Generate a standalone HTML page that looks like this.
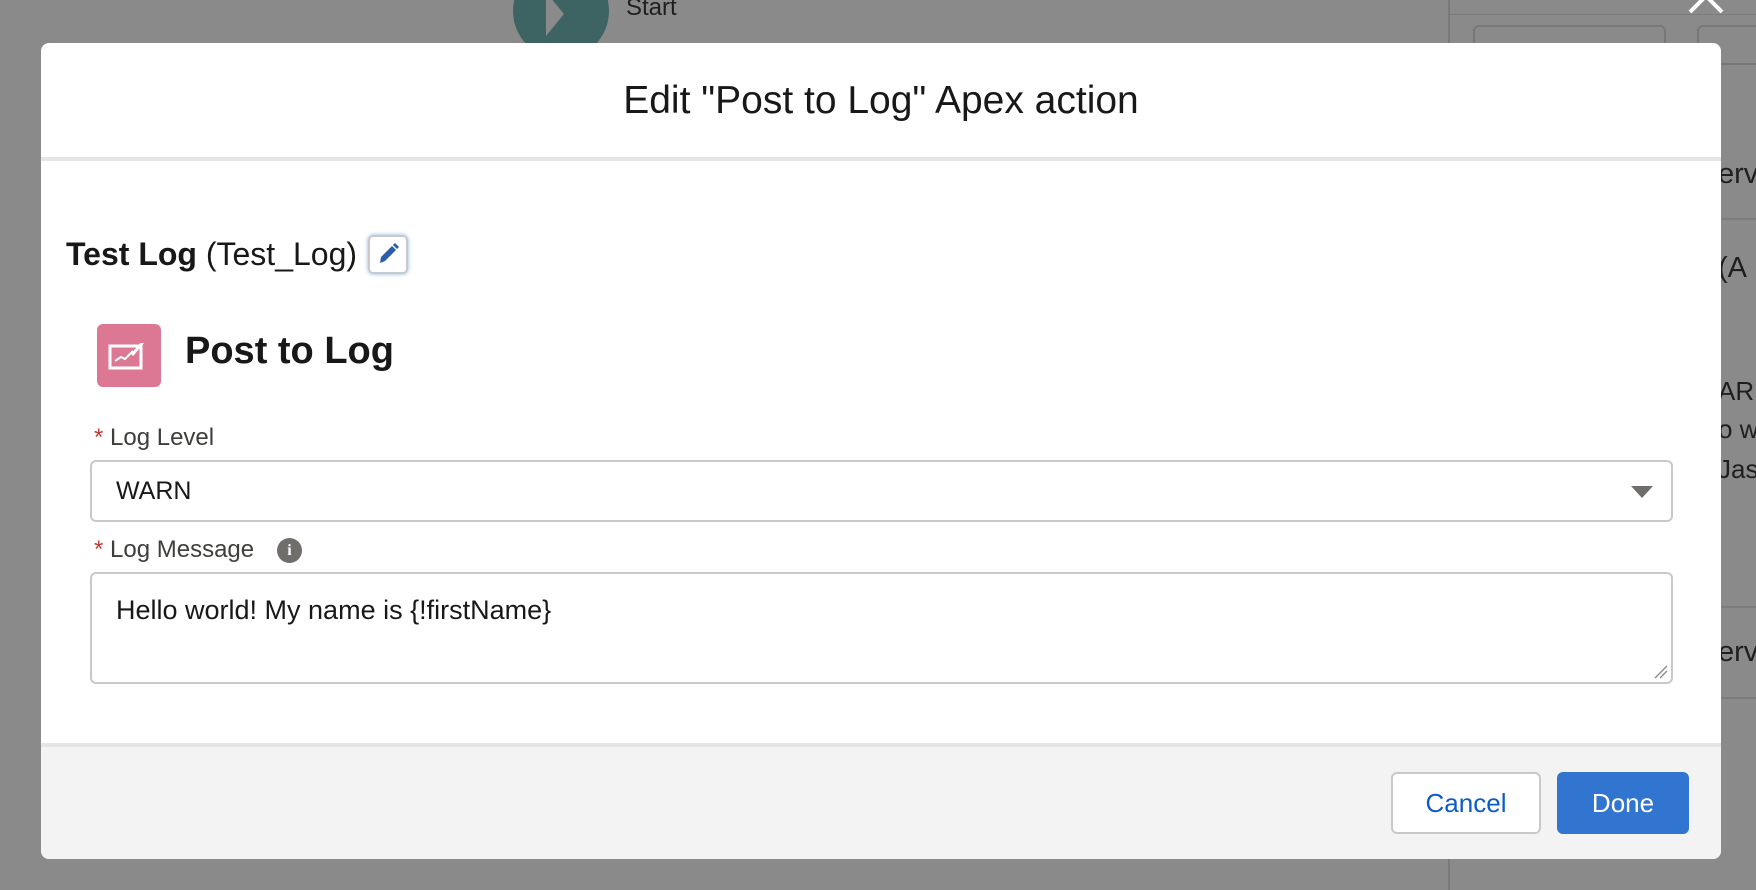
<!DOCTYPE html>
<html><head><meta charset="utf-8"><style>
*{box-sizing:border-box;margin:0;padding:0}
body{width:1756px;height:890px;overflow:hidden;background:#8a8a8a;font-family:"Liberation Sans",sans-serif;position:relative;color:#181818}
.abs{position:absolute}
.bgtxt{position:absolute;color:#1f1f1f;font-size:29px;white-space:nowrap}
</style></head><body>
<div class="abs" style="left:1448px;top:0;width:2px;height:890px;background:#7a7a7a"></div>
<div class="abs" style="left:1450px;top:14px;width:306px;height:1px;background:#7c7c7c"></div>
<div class="abs" style="left:1473px;top:25px;width:193px;height:40px;border:2px solid #777;border-radius:6px"></div>
<div class="abs" style="left:1697px;top:25px;width:70px;height:40px;border:2px solid #777;border-radius:6px"></div>
<div class="abs" style="left:1450px;top:218px;width:306px;height:2px;background:#7c7c7c"></div>
<div class="abs" style="left:1450px;top:606px;width:306px;height:2px;background:#7c7c7c"></div>
<div class="abs" style="left:1450px;top:697px;width:306px;height:2px;background:#7c7c7c"></div>
<div class="bgtxt" style="left:1718px;top:158px">erv</div>
<div class="bgtxt" style="left:1718px;top:252px">(A</div>
<div class="bgtxt" style="left:1718px;top:376px;font-size:26px">AR</div>
<div class="bgtxt" style="left:1718px;top:414px;font-size:26px">o w</div>
<div class="bgtxt" style="left:1718px;top:454px;font-size:26px">Jas</div>
<div class="bgtxt" style="left:1718px;top:636px">erv</div>
<svg class="abs" style="left:1684px;top:0" width="44" height="16"><path d="M6 12 L38 -20 M38 12 L6 -20" stroke="#fff" stroke-width="4" fill="none"/></svg>
<div class="abs" style="left:513px;top:-37px;width:96px;height:96px;border-radius:50%;background:#3d6462"></div>
<svg class="abs" style="left:542px;top:0" width="40" height="40"><path d="M4 0 L4 36 L22 14 L4 -8Z" fill="#8a8a8a"/></svg>
<div class="abs" style="left:626px;top:-6px;font-size:24px;color:#1f1f1f">Start</div>

<div class="abs" style="left:41px;top:43px;width:1680px;height:816px;background:#fff;border-radius:8px;overflow:hidden">
  <div class="abs" style="left:0;top:0;width:100%;height:118px;border-bottom:4px solid #e5e5e5;text-align:center;line-height:116px;font-size:39px;color:#181818">Edit "Post to Log" Apex action</div>
  <div class="abs" style="left:25px;top:193px;font-size:32px;white-space:nowrap"><b>Test Log</b> (Test_Log)</div>
  <div class="abs" style="left:327px;top:192px;width:40px;height:39px;border:2px solid #c9c9c9;border-radius:5px;box-shadow:0 0 4px #8fb4ea"></div>
  <svg class="abs" style="left:335px;top:199px" width="24" height="24"><path d="M4 21 L5 15 L16 4 L20 8 L9 19 Z" fill="#2d5caa"/><path d="M17 3 L19 1 L23 5 L21 7Z" fill="#2d5caa"/></svg>
  <div class="abs" style="left:56px;top:281px;width:64px;height:63px;background:#dc7894;border-radius:6px"></div>
  <svg class="abs" style="left:56px;top:281px" width="64" height="63"><rect x="13" y="22" width="31" height="22" fill="none" stroke="#fff" stroke-width="3"/><path d="M18 37 L24 33 L28 35 L36 27" stroke="#fff" stroke-width="2" fill="none"/><path d="M35 31 L46 18" stroke="#fff" stroke-width="3"/><path d="M40 18 L48 18" stroke="#dc7894" stroke-width="2"/></svg>
  <div class="abs" style="left:144px;top:283px;font-size:38px;font-weight:bold;line-height:50px">Post to Log</div>
  <div class="abs" style="left:53px;top:381px;font-size:24px;color:#3e3e3c"><span style="color:#c23934">*</span> Log Level</div>
  <div class="abs" style="left:49px;top:417px;width:1583px;height:62px;border:2px solid #c9c9c9;border-radius:6px;font-size:25px;line-height:58px;padding-left:24px">WARN</div>
  <svg class="abs" style="left:1590px;top:443px" width="22" height="14"><path d="M0 0 L22 0 L11 12Z" fill="#706e6b"/></svg>
  <div class="abs" style="left:53px;top:493px;font-size:24px;color:#3e3e3c"><span style="color:#c23934">*</span> Log Message</div>
  <div class="abs" style="left:236px;top:495px;width:25px;height:25px;border-radius:50%;background:#706e6b;color:#fff;font-size:16px;font-weight:bold;text-align:center;line-height:25px;font-family:'Liberation Serif',serif">i</div>
  <div class="abs" style="left:49px;top:529px;width:1583px;height:112px;border:2px solid #c9c9c9;border-radius:6px;font-size:27px;padding:21px 0 0 24px">Hello world! My name is {!firstName}</div>
  <svg class="abs" style="left:1612px;top:621px" width="16" height="16"><path d="M2 14 L14 2 M7 14 L14 7" stroke="#888" stroke-width="1.3"/></svg>
  <div class="abs" style="left:0;top:700px;width:100%;height:116px;background:#f3f3f3;border-top:4px solid #e5e5e5"></div>
  <div class="abs" style="left:1350px;top:729px;width:150px;height:62px;border:2px solid #c9c9c9;border-radius:6px;background:#fff;color:#0b5cc9;font-size:26px;text-align:center;line-height:58px">Cancel</div>
  <div class="abs" style="left:1516px;top:729px;width:132px;height:62px;border-radius:6px;background:#3275d0;color:#fff;font-size:26px;text-align:center;line-height:62px">Done</div>
</div>
</body></html>
